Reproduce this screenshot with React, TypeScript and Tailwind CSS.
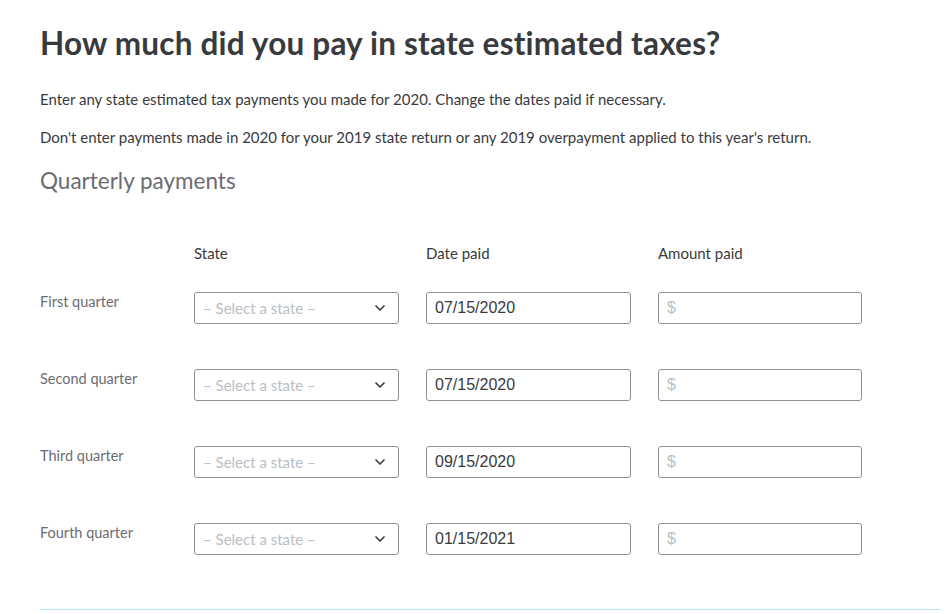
import { ChevronDown } from 'lucide-react'

const quarters = [
  { label: 'First quarter', date: '07/15/2020' },
  { label: 'Second quarter', date: '07/15/2020' },
  { label: 'Third quarter', date: '09/15/2020' },
  { label: 'Fourth quarter', date: '01/15/2021' },
]

export default function App() {
  return (
    <div className="min-h-[614px] bg-white font-['Lato',sans-serif] text-[#393a3d]">
      <div className="ml-10 w-[900px] pt-[25px]">
        {/* Heading */}
        <h1 className="text-[31.5px] font-bold leading-9 tracking-[0.2px]">
          How much did you pay in state estimated taxes?
        </h1>
        <p className="mt-[28px] text-[15px] leading-5">
          Enter any state estimated tax payments you made for 2020. Change the dates paid if necessary.
        </p>
        <p className="mt-[18px] text-[15px] leading-5">
          Don't enter payments made in 2020 for your 2019 state return or any 2019 overpayment applied to this year's return.
        </p>
        <h2 className="mt-[20px] text-[22.5px] font-normal leading-7 text-[#6b6c72]">
          Quarterly payments
        </h2>

        {/* Column headers */}
        <div className="mt-[48px] flex text-[15px] leading-5">
          <div className="w-[154px]" />
          <div className="w-[205px]">State</div>
          <div className="ml-[27px] w-[205px]">Date paid</div>
          <div className="ml-[27px] w-[205px]">Amount paid</div>
        </div>

        {/* Rows */}
        <div className="mt-[29px] flex flex-col gap-[45px]">
          {quarters.map((q) => (
            <div key={q.label} className="flex">
              <div className="w-[154px] text-[14.5px] leading-5 text-[#6b6c72]">{q.label}</div>
              <div className="flex h-[32px] w-[205px] items-center justify-between rounded-[3px] border border-[#8d9096] pl-2 pr-[10px]">
                <span className="text-[15px] text-[#babec5]">– Select a state –</span>
                <ChevronDown size={16} strokeWidth={2.5} className="text-[#393a3d]" />
              </div>
              <div className="ml-[27px] flex h-[32px] w-[205px] items-center rounded-[3px] border border-[#8d9096] px-2 font-['Liberation_Sans',sans-serif] text-[16px] text-[#393a3d]">
                {q.date}
              </div>
              <div className="ml-[27px] flex h-[32px] w-[204px] items-center rounded-[3px] border border-[#8d9096] px-2 font-['Liberation_Sans',sans-serif] text-[16px] text-[#babec5]">
                $
              </div>
            </div>
          ))}
        </div>

        <div className="mt-[54px] h-px bg-[#b7e4f5]" />
      </div>
    </div>
  )
}
